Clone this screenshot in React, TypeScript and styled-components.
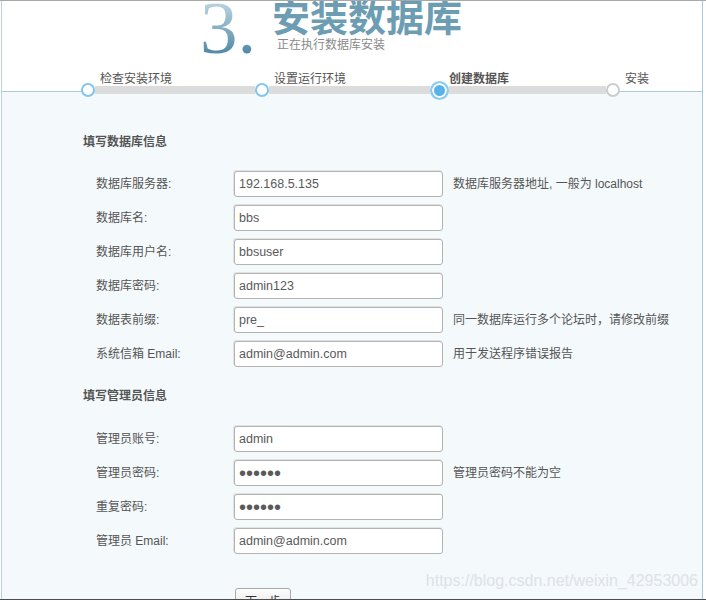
import React from "react";
import styled, { createGlobalStyle, css } from "styled-components";

const Global = createGlobalStyle`
  * { box-sizing: border-box; }
  html, body { margin: 0; padding: 0; overflow: hidden; background: #fff; }
  body { font-family: "Liberation Sans", "Noto Sans CJK SC", sans-serif; color: #555; }
`;

const Page = styled.div`
  height: 600px;
  border-top: 1px solid #a8a8a8;
  border-bottom: 1px solid #4c4c4c;
  overflow: hidden;
`;

const Frame = styled.div`
  position: relative;
  margin-left: 1px;
  width: 702px;
  height: 100%;
  border-left: 1px solid #bcd2da;
  border-right: 1px solid #a9c9d6;
  background: #f4f9fc;
  display: flex;
  flex-direction: column;
`;

const Header = styled.header`
  height: 91px;
  flex: none;
  background: #fff;
  border-bottom: 1px solid #a9cbd8;
  display: flex;
  flex-direction: column;
`;

const Hero = styled.div`
  display: flex;
  align-items: flex-start;
  padding-left: 198px;
`;

const BigNum = styled.div`
  width: 72px;
  margin-top: -11px;
  font-family: "Liberation Serif", serif;
  font-size: 75px;
  line-height: 75px;
  background: linear-gradient(180deg, #c3dbe6 10%, #8fb6c8 45%, #4a84a0 90%);
  -webkit-background-clip: text;
  background-clip: text;
  color: transparent;
`;

const TitleBlock = styled.div`
  margin-top: -3px;
  display: flex;
  flex-direction: column;
`;

const Title = styled.h1`
  margin: 0;
  font-family: "Noto Sans CJK SC", sans-serif;
  font-size: 38px;
  line-height: 34px;
  font-weight: 700;
  color: #6c9db3;
`;

const Subtitle = styled.div`
  margin: 4px 0 0 5px;
  font-family: "Noto Sans CJK SC", sans-serif;
  font-size: 12px;
  line-height: 16px;
  color: #8a8a8a;
`;

const Steps = styled.div`
  position: relative;
  z-index: 1;
  margin-top: auto;
  margin-bottom: -3px;
  margin-left: 79px;
  display: flex;
`;

const Step = styled.div<{ $w?: number }>`
  display: flex;
  flex-direction: column;
  ${(p) => (p.$w ? css`width: ${p.$w}px;` : css`flex: none;`)}
`;

const StepLabel = styled.div<{ $active?: boolean }>`
  height: 16px;
  line-height: 16px;
  padding-left: 19px;
  font-family: "Noto Sans CJK SC", sans-serif;
  font-size: 12px;
  white-space: nowrap;
  color: #555;
  font-weight: ${(p) => (p.$active ? 700 : 400)};
`;

const StepTrack = styled.div`
  height: 8px;
  display: flex;
  align-items: center;
`;

const Dot = styled.span<{ $state: "done" | "active" | "todo" }>`
  flex: none;
  border-radius: 50%;
  position: relative;
  z-index: 1;
  ${(p) =>
    p.$state === "active"
      ? css`
          width: 19px;
          height: 19px;
          background: #5ab2ea;
          border: 2px solid #8ccbf2;
          box-shadow: inset 0 0 0 2px #fff;
        `
      : css`
          width: 14px;
          height: 14px;
          background: #fff;
          border: 2px solid ${p.$state === "todo" ? "#cccccc" : "#82c5ef"};
        `}
`;

const Bar = styled.span`
  flex: 1;
  height: 8px;
  background: #dcdcdc;
`;

const Content = styled.main`
  flex: 1;
  padding: 41px 0 0 81px;
`;

const SectionTitle = styled.h2<{ $gap?: number }>`
  margin: ${(p) => p.$gap ?? 0}px 0 0;
  font-family: "Noto Sans CJK SC", sans-serif;
  font-size: 12px;
  line-height: 16px;
  font-weight: 700;
  color: #555;
`;

const Fields = styled.div<{ $gap: number }>`
  margin-top: ${(p) => p.$gap}px;
  padding-left: 13px;
  display: grid;
  grid-template-columns: 128px 209px auto;
  grid-auto-rows: 26px;
  column-gap: 10px;
  row-gap: 8px;
  align-items: center;
`;

const Label = styled.label`
  font-size: 12px;
  line-height: 16px;
  color: #555;
  white-space: nowrap;
`;

const Input = styled.input<{ $masked?: boolean }>`
  width: 209px;
  height: 26px;
  margin: 0;
  padding: 0 4px;
  border: 1px solid #b3b3b3;
  border-radius: 3px;
  box-shadow: -1px -1px 0 0 #e2e2e2;
  background: #fff;
  font-family: "Liberation Sans", sans-serif;
  font-size: ${(p) => (p.$masked ? "20px" : "12.5px")};
  color: #5a5a5a;
  outline: none;
`;

const Hint = styled.span`
  font-size: 12px;
  line-height: 16px;
  color: #555;
  white-space: nowrap;
`;

const Actions = styled.div`
  margin-top: 34px;
  padding-left: 152px;
`;

const Button = styled.button`
  width: 56px;
  height: 24px;
  padding: 0;
  border: 1px solid #aaa;
  border-radius: 3px;
  background: linear-gradient(180deg, #fdfdfd, #e3e3e3);
  font-family: "Noto Sans CJK SC", sans-serif;
  font-size: 12px;
  color: #333;
`;

const Watermark = styled.div`
  position: absolute;
  right: 4px;
  bottom: 10px;
  font-family: "Liberation Sans", sans-serif;
  font-size: 16px;
  line-height: 16px;
  color: #dde2e6;
  pointer-events: none;
`;

type Field = { label: string; value: string; hint?: string; password?: boolean };

const dbFields: Field[] = [
  { label: "数据库服务器:", value: "192.168.5.135", hint: "数据库服务器地址, 一般为 localhost" },
  { label: "数据库名:", value: "bbs" },
  { label: "数据库用户名:", value: "bbsuser" },
  { label: "数据库密码:", value: "admin123" },
  { label: "数据表前缀:", value: "pre_", hint: "同一数据库运行多个论坛时，请修改前缀" },
  { label: "系统信箱 Email:", value: "admin@admin.com", hint: "用于发送程序错误报告" },
];

const adminFields: Field[] = [
  { label: "管理员账号:", value: "admin" },
  { label: "管理员密码:", value: "123456", password: true, hint: "管理员密码不能为空" },
  { label: "重复密码:", value: "123456", password: true },
  { label: "管理员 Email:", value: "admin@admin.com" },
];

const FieldRows = ({ fields, gap }: { fields: Field[]; gap: number }) => (
  <Fields $gap={gap}>
    {fields.map((f) => (
      <React.Fragment key={f.label}>
        <Label>{f.label}</Label>
        <Input
          type={f.password ? "password" : "text"}
          $masked={f.password}
          defaultValue={f.value}
          readOnly
        />
        <Hint>{f.hint ?? ""}</Hint>
      </React.Fragment>
    ))}
  </Fields>
);

const steps: { label: string; state: "done" | "active" | "todo"; w?: number }[] = [
  { label: "检查安装环境", state: "done", w: 174 },
  { label: "设置运行环境", state: "done", w: 175 },
  { label: "创建数据库", state: "active", w: 176 },
  { label: "安装", state: "todo" },
];

export default function App() {
  return (
    <>
      <Global />
      <Page>
        <Frame>
          <Header>
            <Hero>
              <BigNum>3.</BigNum>
              <TitleBlock>
                <Title>安装数据库</Title>
                <Subtitle>正在执行数据库安装</Subtitle>
              </TitleBlock>
            </Hero>
            <Steps>
              {steps.map((s) => (
                <Step key={s.label} $w={s.w}>
                  <StepLabel $active={s.state === "active"}>{s.label}</StepLabel>
                  <StepTrack>
                    <Dot $state={s.state} />
                    {s.w ? <Bar /> : null}
                  </StepTrack>
                </Step>
              ))}
            </Steps>
          </Header>
          <Content>
            <SectionTitle>填写数据库信息</SectionTitle>
            <FieldRows fields={dbFields} gap={22} />
            <SectionTitle $gap={20}>填写管理员信息</SectionTitle>
            <FieldRows fields={adminFields} gap={23} />
            <Actions>
              <Button type="button">下一步</Button>
            </Actions>
          </Content>
          <Watermark>https://blog.csdn.net/weixin_42953006</Watermark>
        </Frame>
      </Page>
    </>
  );
}
